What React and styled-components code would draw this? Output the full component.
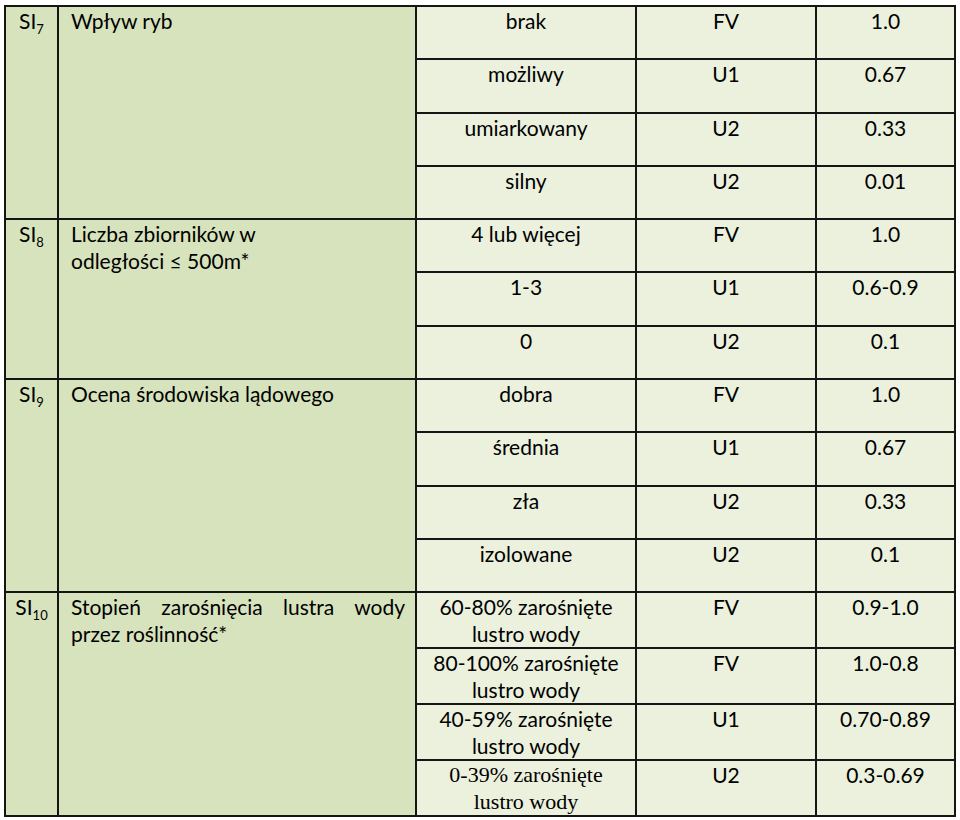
import styled, { createGlobalStyle } from "styled-components";

const GlobalStyle = createGlobalStyle`
	html, body {
		margin: 0;
		padding: 0;
		background: #ffffff;
	}
`;

const columns = [53, 358, 220, 180, 139];

const sections = [
	{
		id: "7",
		name: "Wpływ ryb",
		items: [
			["brak", "FV", "1.0"],
			["możliwy", "U1", "0.67"],
			["umiarkowany", "U2", "0.33"],
			["silny", "U2", "0.01"],
		],
	},
	{
		id: "8",
		name: (
			<>
				Liczba zbiorników w
				<br />
				odległości ≤ 500m*
			</>
		),
		items: [
			["4 lub więcej", "FV", "1.0"],
			["1-3", "U1", "0.6-0.9"],
			["0", "U2", "0.1"],
		],
	},
	{
		id: "9",
		name: "Ocena środowiska lądowego",
		items: [
			["dobra", "FV", "1.0"],
			["średnia", "U1", "0.67"],
			["zła", "U2", "0.33"],
			["izolowane", "U2", "0.1"],
		],
	},
	{
		id: "10",
		name: "Stopień zarośnięcia lustra wody przez roślinność*",
		justify: true,
		tall: true,
		items: [
			["60-80% zarośnięte", "FV", "0.9-1.0"],
			["80-100% zarośnięte", "FV", "1.0-0.8"],
			["40-59% zarośnięte", "U1", "0.70-0.89"],
			["0-39% zarośnięte", "U2", "0.3-0.69", true],
		],
	},
];

const App = () => {
	return (
		<>
			<GlobalStyle />
			<Page>
				<Table>
					<colgroup>
						{columns.map((w, i) => (
							<Col key={i} $w={w} />
						))}
					</colgroup>
					<tbody>
						{sections.map((section) =>
							section.items.map((item, i) => (
								<Row key={section.id + "-" + i} $tall={section.tall}>
									{i === 0 && (
										<>
											<IdCell rowSpan={section.items.length}>
												SI<Sub>{section.id}</Sub>
											</IdCell>
											<NameCell
												rowSpan={section.items.length}
												$justify={section.justify}
											>
												{section.name}
											</NameCell>
										</>
									)}
									<ValueCell $serif={item[3]}>
										{section.tall ? (
											<>
												{item[0]}
												<br />
												lustro wody
											</>
										) : (
											item[0]
										)}
									</ValueCell>
									<ValueCell>{item[1]}</ValueCell>
									<ValueCell>{item[2]}</ValueCell>
								</Row>
							))
						)}
					</tbody>
				</Table>
			</Page>
		</>
	);
};

const Page = styled.div`
	padding: 5px 0 0 4px;
`;

const Table = styled.table`
	width: 950px;
	table-layout: fixed;
	border-collapse: collapse;
	font-family: Lato, "Liberation Sans", sans-serif;
	font-size: 21px;
	color: #000000;
	border: 2px solid #151515;
`;

const Col = styled.col`
	width: ${(p) => p.$w}px;
`;

const Row = styled.tr`
	height: ${(p) => (p.$tall ? "55px" : "53.3px")};
`;

const Cell = styled.td`
	border: 2px solid #151515;
	vertical-align: top;
	line-height: 27px;
	padding: 0 12px;
`;

const IdCell = styled(Cell)`
	background: #d7e3bc;
	text-align: center;
	padding: 0 4px;
`;

const NameCell = styled(Cell)`
	background: #d7e3bc;
	text-align: ${(p) => (p.$justify ? "justify" : "left")};
	padding: 0 10px 0 12px;
`;

const ValueCell = styled(Cell)`
	background: #ebf1dd;
	text-align: center;
	font-family: ${(p) =>
		p.$serif
			? '"Liberation Serif", serif'
			: 'Lato, "Liberation Sans", sans-serif'};
	font-size: ${(p) => (p.$serif ? "22px" : "21px")};
`;

const Sub = styled.sub`
	font-size: 13px;
	vertical-align: -5px;
	line-height: 0;
`;

export default App;
